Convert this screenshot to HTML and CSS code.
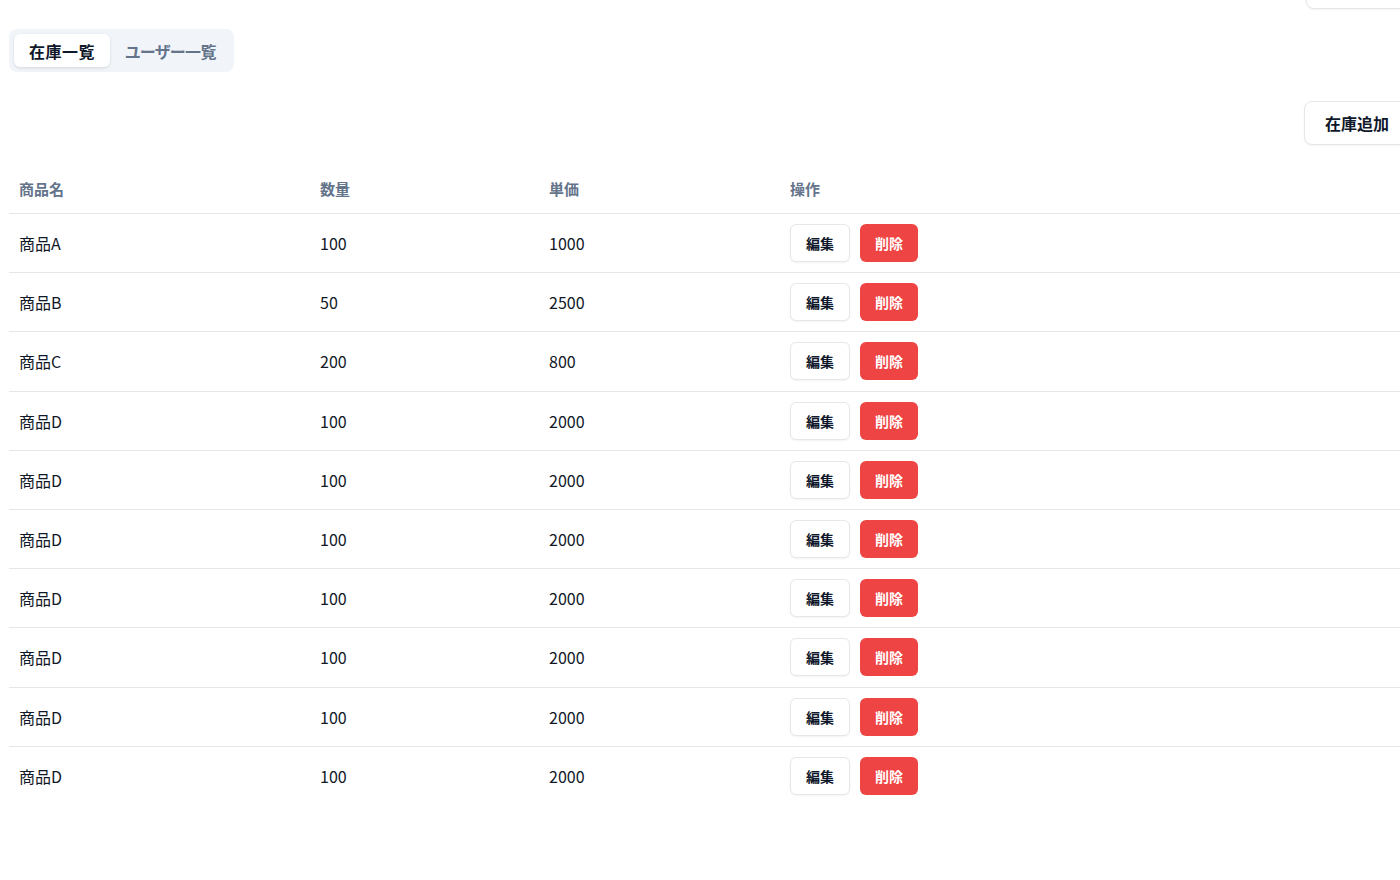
FILE: index.html
```html
<!DOCTYPE html>
<html lang="ja">
<head>
<meta charset="utf-8">
<title>在庫一覧</title>
<link rel="stylesheet" href="styles.css">
</head>
<body>
<div class="page">
  <div class="topbar"><div class="top-box"></div></div>
  <div class="tabs">
    <button class="tab active">在庫一覧</button>
    <button class="tab tab-narrow">ユーザー一覧</button>
  </div>
  <div class="toolbar">
    <button class="btn-add">在庫追加</button>
  </div>
  <table class="stock">
    <colgroup>
      <col class="c1"><col class="c2"><col class="c3"><col class="c4">
    </colgroup>
    <thead>
      <tr><th>商品名</th><th>数量</th><th>単価</th><th>操作</th></tr>
    </thead>
    <tbody>
      <tr><td>商品A</td><td>100</td><td>1000</td><td><div class="actions"><button class="btn-edit">編集</button><button class="btn-del">削除</button></div></td></tr>
      <tr><td>商品B</td><td>50</td><td>2500</td><td><div class="actions"><button class="btn-edit">編集</button><button class="btn-del">削除</button></div></td></tr>
      <tr><td>商品C</td><td>200</td><td>800</td><td><div class="actions"><button class="btn-edit">編集</button><button class="btn-del">削除</button></div></td></tr>
      <tr><td>商品D</td><td>100</td><td>2000</td><td><div class="actions"><button class="btn-edit">編集</button><button class="btn-del">削除</button></div></td></tr>
      <tr><td>商品D</td><td>100</td><td>2000</td><td><div class="actions"><button class="btn-edit">編集</button><button class="btn-del">削除</button></div></td></tr>
      <tr><td>商品D</td><td>100</td><td>2000</td><td><div class="actions"><button class="btn-edit">編集</button><button class="btn-del">削除</button></div></td></tr>
      <tr><td>商品D</td><td>100</td><td>2000</td><td><div class="actions"><button class="btn-edit">編集</button><button class="btn-del">削除</button></div></td></tr>
      <tr><td>商品D</td><td>100</td><td>2000</td><td><div class="actions"><button class="btn-edit">編集</button><button class="btn-del">削除</button></div></td></tr>
      <tr><td>商品D</td><td>100</td><td>2000</td><td><div class="actions"><button class="btn-edit">編集</button><button class="btn-del">削除</button></div></td></tr>
      <tr><td>商品D</td><td>100</td><td>2000</td><td><div class="actions"><button class="btn-edit">編集</button><button class="btn-del">削除</button></div></td></tr>
    </tbody>
  </table>
</div>
</body>
</html>
```
FILE: styles.css
```css
html, body {
  margin: 0;
  padding: 0;
  overflow: hidden;
  background: #ffffff;
}
body {
  font-family: "Noto Sans CJK JP", "Noto Sans", sans-serif;
  color: #111827;
  font-size: 16px;
}
.page {
  width: 1401px;
  padding-left: 9px;
}
button {
  font-family: inherit;
  cursor: pointer;
}
.topbar {
  display: flex;
  justify-content: flex-end;
  height: 9px;
}
.top-box {
  width: 104px;
  height: 44px;
  margin-top: -35px;
  box-sizing: border-box;
  border: 1px solid #e5e7eb;
  border-radius: 8px;
  background: #fff;
  box-shadow: 0 1px 2px rgba(0,0,0,0.05);
}
.tabs {
  margin-top: 20px;
  display: inline-flex;
  background: #f1f5f9;
  border-radius: 8px;
  padding: 5px 4px 5px 5px;
}
.tab {
  border: none;
  background: transparent;
  font-size: 16px;
  font-weight: 700;
  color: #64748b;
  height: 33px;
  padding: 0 15px;
  border-radius: 6px;
  font-feature-settings: "palt";
  letter-spacing: 0.5px;
}
.tab-narrow {
  letter-spacing: -0.5px;
  padding: 0 14px 0 15px;
}
.tab.active {
  background: #ffffff;
  color: #0f172a;
  box-shadow: 0 1px 3px rgba(0,0,0,0.12);
}
.toolbar {
  display: flex;
  justify-content: flex-end;
  margin-top: 29px;
}
.btn-add {
  height: 44px;
  padding: 0 20px;
  border: 1px solid #e5e7eb;
  border-radius: 8px;
  background: #fff;
  font-size: 16px;
  font-weight: 700;
  color: #0f172a;
  box-shadow: 0 1px 2px rgba(0,0,0,0.05);
}
.stock {
  margin-top: 22px;
  width: 1401px;
  border-collapse: collapse;
  table-layout: fixed;
}
.c1 { width: 301px; }
.c2 { width: 229px; }
.c3 { width: 241px; }
.stock th {
  text-align: left;
  font-size: 15px;
  font-weight: 700;
  color: #64748b;
  padding: 10px 10px 12px;
  height: 24px;
  line-height: 24px;
  border-bottom: 1px solid #e5e7eb;
}
.stock td {
  padding: 10px 10px;
  font-size: 16px;
  line-height: 24px;
  border-bottom: 1px solid #e5e7eb;
  height: 38.2px;
  vertical-align: middle;
}
.stock tbody tr:last-child td {
  border-bottom: none;
}
.actions {
  display: flex;
  gap: 10px;
}
.btn-edit {
  height: 38px;
  padding: 0 15px;
  border: 1px solid #e5e7eb;
  border-radius: 6px;
  background: #fff;
  font-size: 14px;
  font-weight: 700;
  color: #0f172a;
  box-shadow: 0 1px 2px rgba(0,0,0,0.05);
}
.btn-del {
  height: 38px;
  padding: 0 15px;
  border: none;
  border-radius: 6px;
  background: #ef4444;
  font-size: 14px;
  font-weight: 700;
  color: #fff;
}
```
